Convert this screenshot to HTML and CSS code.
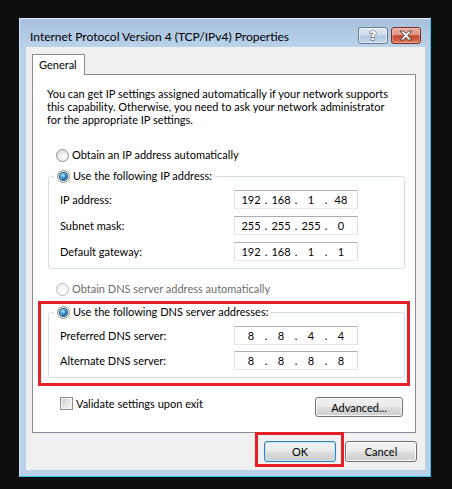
FILE: index.html
```html
<!DOCTYPE html>
<html lang="en">
<head>
<meta charset="utf-8">
<title>Internet Protocol Version 4 (TCP/IPv4) Properties</title>
<link rel="stylesheet" href="styles.css">
</head>
<body>
<div class="window">
  <div class="titlebar">
    <span class="title">Internet Protocol Version 4 (TCP/IPv4) Properties</span>
    <div class="caption-btns">
      <div class="cbtn help"><span class="qmark">?</span></div>
      <div class="cbtn close">
        <svg width="16" height="11" viewBox="0 0 16 11"><path d="M2 1 h3.5 l2.5 2.6 l2.5 -2.6 h3.5 l-4.2 4.5 l4.2 4.5 h-3.5 l-2.5 -2.6 l-2.5 2.6 h-3.5 l4.2 -4.5 z" fill="#fff" stroke="#4a3a3a" stroke-width="0.9" stroke-linejoin="round"/></svg>
      </div>
    </div>
  </div>
  <div class="client">
    <div class="tabs"><div class="tab">General</div></div>
    <div class="panel">
      <p class="desc">You can get IP settings assigned automatically if your network supports<br>this capability. Otherwise, you need to ask your network administrator<br>for the appropriate IP settings.</p>
      <div class="opt"><span class="radio"></span>Obtain an IP address automatically</div>
      <fieldset class="group ipgroup">
        <legend><span class="radio checked"></span>Use the following IP address:</legend>
        <div class="field"><span>IP address:</span><div class="ip"><span>192</span><i>.</i><span>168</span><i>.</i><span>1</span><i>.</i><span>48</span></div></div>
        <div class="field"><span>Subnet mask:</span><div class="ip"><span>255</span><i>.</i><span>255</span><i>.</i><span>255</span><i>.</i><span>0</span></div></div>
        <div class="field"><span>Default gateway:</span><div class="ip"><span>192</span><i>.</i><span>168</span><i>.</i><span>1</span><i>.</i><span>1</span></div></div>
      </fieldset>
      <div class="opt disabled dnsopt"><span class="radio"></span>Obtain DNS server address automatically</div>
      <fieldset class="group dnsgroup">
        <legend><span class="radio checked"></span>Use the following DNS server addresses:</legend>
        <div class="field"><span>Preferred DNS server:</span><div class="ip"><span>8</span><i>.</i><span>8</span><i>.</i><span>4</span><i>.</i><span>4</span></div></div>
        <div class="field"><span>Alternate DNS server:</span><div class="ip"><span>8</span><i>.</i><span>8</span><i>.</i><span>8</span><i>.</i><span>8</span></div></div>
      </fieldset>
      <div class="bottom-row">
        <div class="check-row"><span class="checkbox"></span>Validate settings upon exit</div>
        <div class="btn advanced">Advanced...</div>
      </div>
    </div>
    <div class="buttons">
      <div class="btn default">OK</div>
      <div class="btn">Cancel</div>
    </div>
  </div>
</div>
<div class="mark mark-dns"></div>
<div class="mark mark-ok"></div>
</body>
</html>
```
FILE: styles.css
```css
* { box-sizing: border-box; }
html, body { margin: 0; }
body {
  background: #0e0e0e;
  font-family: Lato, "Noto Sans", sans-serif;
  font-size: 11px;
  color: #000;
  padding: 18px 0 0 19px;
  height: 489px;
  overflow: hidden;
}
.window {
  width: 412px;
  height: 459px;
  border: 1px solid;
  border-color: #e4edf7 #2ec3ee #2ec3ee #d6e4f2;
  background: #b9d1ea;
  display: flex;
  flex-direction: column;
}
.titlebar {
  height: 28px;
  flex: none;
  display: flex;
  align-items: center;
  padding: 6px 9px 0 10px;
  background: linear-gradient(#a6c0dd, #bad2ea);
}
.title { flex: 1; white-space: nowrap; font-size: 12px; }
.caption-btns { display: flex; gap: 3px; margin-bottom: 2px; }
.cbtn {
  width: 30px;
  height: 17px;
  border-radius: 3px;
  display: flex;
  align-items: center;
  justify-content: center;
}
.help {
  border: 1px solid #6c7c93;
  background: linear-gradient(#e2eaf4 0%, #ccdaeb 48%, #b0c6df 52%, #c6d8ec 100%);
  box-shadow: inset 0 0 0 1px rgba(255,255,255,0.45);
}
.qmark {
  font-family: "DejaVu Sans", sans-serif;
  font-weight: bold;
  font-size: 13px;
  line-height: 13px;
  color: #fff;
  -webkit-text-stroke: 1px #4a4f58;
  paint-order: stroke fill;
}
.close {
  border: 1px solid #7a2b22;
  background: linear-gradient(#ebb3a7 0%, #dc9383 45%, #c4462f 52%, #cf5f3f 80%, #e08f6c 100%);
  box-shadow: inset 0 0 0 1px rgba(255,220,210,0.35);
}
.client {
  flex: 1;
  margin: 0 5px 6px 6px;
  background: #f0f0f0;
  padding: 7px 8px 8px 6px;
  display: flex;
  flex-direction: column;
}
.tabs { display: flex; height: 20px; flex: none; }
.tab {
  width: 53px;
  height: 21px;
  border: 1px solid #898c95;
  border-bottom: 0;
  background: #fff;
  padding-left: 6px;
  line-height: 19px;
  position: relative;
  z-index: 1;
}
.panel {
  height: 359px;
  flex: none;
  margin-right: 1px;
  border: 1px solid #898c95;
  background: #fff;
  display: flex;
  flex-direction: column;
}
.desc {
  margin: 12px 0 0 14px;
  line-height: 13px;
  white-space: nowrap;
}
.opt {
  display: flex;
  align-items: center;
  height: 14px;
  line-height: 14px;
  margin: 22px 0 0 23px;
}
.opt.disabled { color: #6d6d6d; }
.dnsopt { margin-top: 13px; }
.radio {
  width: 13px;
  height: 13px;
  flex: none;
  border-radius: 50%;
  border: 1px solid #8e8f8f;
  background: radial-gradient(circle at 65% 70%, #ffffff 0%, #eeeeee 45%, #d4d4d4 100%);
  margin-right: 3px;
  display: flex;
  align-items: center;
  justify-content: center;
}
.opt.disabled .radio {
  border-color: #b8b8b8;
  background: radial-gradient(circle at 65% 70%, #ffffff 0%, #f4f4f4 60%, #e8e8e8 100%);
}
.radio.checked::after {
  content: "";
  width: 7px;
  height: 7px;
  border-radius: 50%;
  background: radial-gradient(circle at 40% 35%, #b8ecff 0%, #45a8e6 35%, #13609f 70%, #0b365f 100%);
  box-shadow: 0 0 0 1px #3a5570;
}
.group {
  margin: 7px 10px 0 15px;
  padding: 7px 11px;
  border: 1px solid #d5dfe5;
  border-radius: 3px;
  min-width: 0;
  display: flex;
  flex-direction: column;
  gap: 7px;
}
.dnsgroup { margin-top: 9px; gap: 6px; }
.group legend {
  display: flex;
  align-items: center;
  height: 14px;
  line-height: 14px;
  padding: 0 3px 0 3px;
  margin-left: -6px;
}
.field {
  display: grid;
  grid-template-columns: 174px 124px;
  align-items: center;
  height: 19px;
}
.ip {
  width: 124px;
  height: 19px;
  border: 1px solid;
  border-color: #abadb3 #dbdfe6 #e3e9ef #e2e3ea;
  background: #fff;
  display: grid;
  grid-template-columns: 26px 4px 26px 4px 26px 4px 26px;
  padding-left: 3px;
  align-items: center;
  text-align: center;
  line-height: 17px;
}
.ip i { font-style: normal; }
.bottom-row {
  display: flex;
  justify-content: space-between;
  align-items: flex-start;
  margin: 19px 12px 0 27px;
}
.check-row { display: flex; align-items: center; height: 13px; line-height: 13px; }
.checkbox {
  width: 13px;
  height: 13px;
  border: 1px solid #8e8f8f;
  background: linear-gradient(135deg, #cfcfcf, #f7f7f7);
  box-shadow: inset 0 0 0 1px #f4f4f4;
  margin-right: 3px;
}
.btn {
  width: 72px;
  height: 21px;
  border: 1px solid #707070;
  border-radius: 3px;
  background: linear-gradient(#f2f2f2 0%, #ebebeb 48%, #dddddd 52%, #cfcfcf 100%);
  box-shadow: inset 0 0 0 1px #fbfbfb;
  display: flex;
  align-items: center;
  justify-content: center;
}
.advanced { width: 88px; height: 20px; }
.btn.default {
  border-color: #3c7fb1;
  box-shadow: inset 0 0 0 1px #b8e6fb;
}
.buttons {
  display: flex;
  justify-content: flex-end;
  gap: 9px;
  margin-top: 8px;
}
.mark {
  position: absolute;
  border: 3px solid #e51f26;
}
.mark-dns { left: 38px; top: 301px; width: 372px; height: 85px; }
.mark-ok { left: 255px; top: 432px; width: 89px; height: 35px; }
```
